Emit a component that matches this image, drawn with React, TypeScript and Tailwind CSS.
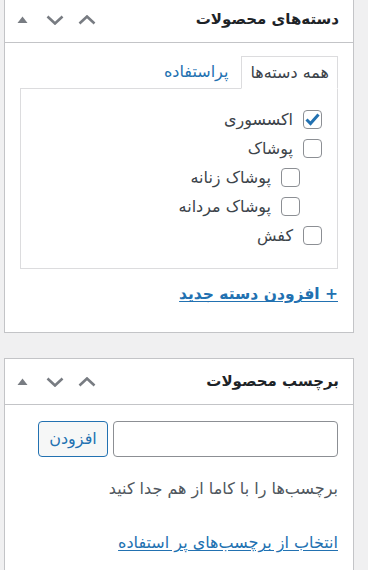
import React from "react";

const font = { fontFamily: '"DejaVu Sans", "Noto Sans", sans-serif' };

function HeaderIcons() {
  return (
    <div className="flex items-center" dir="ltr">
      <svg width="11" height="8" viewBox="0 0 11 8" className="mr-[18px]">
        <polygon points="5.5,0.5 10.5,7 0.5,7" fill="#787c82" />
      </svg>
      <svg width="18" height="10" viewBox="0 0 18 10" className="mr-[14px]">
        <polyline points="1.5,1.5 9,8.5 16.5,1.5" fill="none" stroke="#787c82" strokeWidth="2.6" />
      </svg>
      <svg width="18" height="10" viewBox="0 0 18 10">
        <polyline points="1.5,8.5 9,1.5 16.5,8.5" fill="none" stroke="#787c82" strokeWidth="2.6" />
      </svg>
    </div>
  );
}

function Box({ children }: { children: React.ReactNode }) {
  return <div className="w-[19px] h-[19px] border border-[#8c8f94] rounded-[4px] bg-white flex items-center justify-center shrink-0">{children}</div>;
}

function Row({ label, checked, child }: { label: string; checked?: boolean; child?: boolean }) {
  return (
    <div className={"flex items-center h-[29px] gap-[10px] " + (child ? "pr-[37px]" : "pr-[15px]")}>
      <Box>
        {checked && (
          <svg width="15" height="13" viewBox="0 0 15 13">
            <polyline points="1.5,6.5 5.5,10.5 13.5,1.5" fill="none" stroke="#2271b1" strokeWidth="3" />
          </svg>
        )}
      </Box>
      <span className="text-[16px] text-[#3c434a]">{label}</span>
    </div>
  );
}

export default function App() {
  return (
    <div dir="rtl" style={font} className="w-[368px] h-[570px] overflow-hidden bg-[#f0f0f1] pl-[4px] pr-[14px]">
      <div className="-mt-[4px] bg-white border border-[#c3c4c7]">
        <div className="h-[46px] border-b border-[#c3c4c7] flex items-center justify-between pr-[14px] pl-[12px]">
          <h2 className="text-[15px] font-bold text-[#1d2327]">دسته‌های محصولات</h2>
          <HeaderIcons />
        </div>
        <div className="px-[15px] pt-[12px] pb-[27px]">
          <div className="flex items-end gap-[13px]">
            <div className="h-[33px] px-[8px] border border-[#dcdcde] border-b-white bg-white -mb-[1px] relative z-10 flex items-center text-[16px] text-[#3c434a]">همه دسته‌ها</div>
            <a className="text-[16px] text-[#2271b1] h-[33px] flex items-center">پراستفاده</a>
          </div>
          <div className="border border-[#dcdcde] h-[181px] pt-[16px]">
            <Row label="اکسسوری" checked />
            <Row label="پوشاک" />
            <Row label="پوشاک زنانه" child />
            <Row label="پوشاک مردانه" child />
            <Row label="کفش" />
          </div>
          <div className="mt-[16px] h-[20px] flex items-center">
            <a className="text-[15.5px] font-bold text-[#2271b1] underline underline-offset-2">+ افزودن دسته جدید</a>
          </div>
        </div>
      </div>

      <div className="mt-[25px] bg-white border border-[#c3c4c7] h-[300px]">
        <div className="h-[46px] border-b border-[#c3c4c7] flex items-center justify-between pr-[14px] pl-[12px]">
          <h2 className="text-[15px] font-bold text-[#1d2327]">برچسب محصولات</h2>
          <HeaderIcons />
        </div>
        <div className="px-[15px] pt-[16px]">
          <div className="flex gap-[5px] items-center">
            <div className="w-[225px] h-[36px] border border-[#8c8f94] rounded-[4px] bg-white" />
            <button className="w-[70px] h-[36px] border border-[#2271b1] rounded-[4px] bg-[#f6f7f7] text-[#2271b1] text-[16px]">افزودن</button>
          </div>
          <p className="mt-[20px] text-[16px] text-[#50575e] leading-[24px]">برچسب‌ها را با کاما از هم جدا کنید</p>
          <div className="mt-[30px]">
            <a className="text-[16px] text-[#2271b1] underline underline-offset-2">انتخاب از برچسب‌های پر استفاده</a>
          </div>
        </div>
      </div>
    </div>
  );
}
